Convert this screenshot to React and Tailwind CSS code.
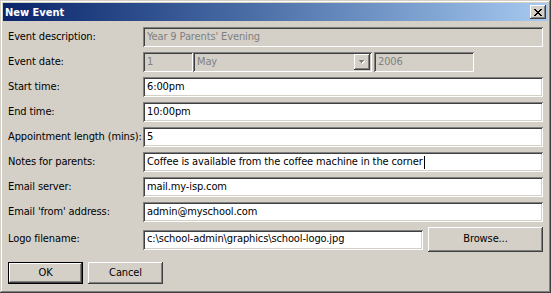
const sunken = 'shadow-[inset_1px_1px_#808080,inset_-1px_-1px_#ffffff,inset_2px_2px_#404040,inset_-2px_-2px_#d4d0c8]'
const raised = 'shadow-[inset_-1px_-1px_#404040,inset_1px_1px_#ffffff,inset_-2px_-2px_#808080,inset_2px_2px_#d4d0c8]'

function Field({ value, disabled, className = '', children }) {
  return (
    <div
      className={`h-[20px] flex items-center pl-[4px] pr-[4px] whitespace-nowrap overflow-hidden ${sunken} ${
        disabled ? 'bg-[#d4d0c8] text-[#808080]' : 'bg-white text-black'
      } ${className}`}
    >
      {value}
      {children}
    </div>
  )
}

function Row({ label, children }) {
  return (
    <div className="flex items-center h-[20px]">
      <div className="w-[135px] shrink-0 whitespace-nowrap">{label}</div>
      <div className="flex-1 flex">{children}</div>
    </div>
  )
}

function Button({ children, primary, className = '' }) {
  if (primary) {
    return (
      <div className={`border border-black flex ${className}`}>
        <div className={`flex-1 flex items-center justify-center bg-[#d4d0c8] ${raised}`}>{children}</div>
      </div>
    )
  }
  return (
    <div className={`flex items-center justify-center bg-[#d4d0c8] ${raised} ${className}`}>{children}</div>
  )
}

export default function App() {
  return (
    <div className="w-[551px] h-[293px] bg-[#d4d0c8] font-['DejaVu_Sans_Condensed','Liberation_Sans',sans-serif] text-[11px] tracking-[-0.12px] text-black shadow-[inset_-1px_-1px_#404040,inset_1px_1px_#d4d0c8,inset_-2px_-2px_#808080,inset_2px_2px_#ffffff] p-[3px] flex flex-col select-none">
      {/* title bar */}
      <div className="h-[18px] shrink-0 flex items-center justify-between bg-linear-to-r from-[#0a246a] to-[#a6caf0] pl-[2px] pr-[2px]">
        <span className="text-white font-bold text-[11px] leading-none tracking-normal">New Event</span>
        <div className={`w-[16px] h-[14px] bg-[#d4d0c8] flex items-center justify-center ${raised}`}>
          <svg width="8" height="7" viewBox="0 0 8 7" shapeRendering="crispEdges">
            <path d="M0 0h2v1H0zM6 0h2v1H6zM1 1h2v1H1zM5 1h2v1H5zM2 2h4v1H2zM3 3h2v1H3zM2 4h4v1H2zM1 5h2v1H1zM5 5h2v1H5zM0 6h2v1H0zM6 6h2v1H6z" fill="#000" />
          </svg>
        </div>
      </div>

      {/* body */}
      <div className="flex-1 flex flex-col pt-[6px] px-[5px]">
        <div className="flex flex-col gap-[5px]">
          <Row label="Event description:">
            <Field value="Year 9 Parents' Evening" disabled className="flex-1" />
          </Row>
          <Row label="Event date:">
            <Field value="1" disabled className="w-[50px]" />
            <div className={`w-[179px] h-[20px] flex items-center bg-[#d4d0c8] text-[#808080] pl-[4px] pr-[2px] ${sunken}`}>
              <span className="flex-1">May</span>
              <div className={`w-[16px] h-[16px] flex items-center justify-center ${raised}`}>
                <svg width="7" height="5" viewBox="0 0 7 5" shapeRendering="crispEdges">
                  <path d="M1 1h5v1H1zM2 2h3v1H2zM3 3h1v1H3z" fill="#ffffff" />
                  <path d="M0 0h5v1H0zM1 1h3v1H1zM2 2h1v1H2z" fill="#808080" />
                </svg>
              </div>
            </div>
            <Field value="2006" disabled className="w-[100px] ml-[2px]" />
          </Row>
          <Row label="Start time:">
            <Field value="6:00pm" className="flex-1" />
          </Row>
          <Row label="End time:">
            <Field value="10:00pm" className="flex-1" />
          </Row>
          <Row label="Appointment length (mins):">
            <Field value="5" className="flex-1" />
          </Row>
          <Row label="Notes for parents:">
            <Field value="Coffee is available from the coffee machine in the corner" className="flex-1">
              <span className="inline-block w-px h-[13px] bg-black ml-px" />
            </Field>
          </Row>
          <Row label="Email server:">
            <Field value="mail.my-isp.com" className="flex-1" />
          </Row>
          <Row label="Email 'from' address:">
            <Field value="admin@myschool.com" className="flex-1" />
          </Row>
        </div>

        <div className="flex items-center h-[25px] mt-[5px]">
          <div className="w-[135px] shrink-0 whitespace-nowrap">Logo filename:</div>
          <Field value="c:\school-admin\graphics\school-logo.jpg" className="w-[280px]" />
          <Button className="ml-[5px] flex-1 h-[25px]">Browse...</Button>
        </div>

        <div className="flex gap-[5px] mt-[10px]">
          <Button primary className="w-[75px] h-[22px]">OK</Button>
          <Button className="w-[75px] h-[22px]">Cancel</Button>
        </div>
      </div>
    </div>
  )
}
